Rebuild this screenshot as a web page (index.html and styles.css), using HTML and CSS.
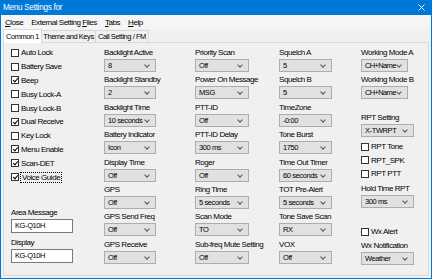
FILE: index.html
```html
<!DOCTYPE html>
<html lang="en">
<head>
    <meta charset="UTF-8">
    <title>Menu Settings</title>
    <link rel="stylesheet" href="styles.css">
</head>
<body>
    <div class="window">
        <div class="titlebar">
            <span class="title">Menu Settings for</span>
            <svg class="close-x" width="7" height="7" viewBox="0 0 7 7"><path d="M0.5 0.5 L6.5 6.5 M6.5 0.5 L0.5 6.5" stroke="#fff" stroke-width="1"/></svg>
        </div>
        <div class="menubar">
            <span><u>C</u>lose</span>
            <span>External Setting <u>F</u>iles</span>
            <span class="menu-tabs"><u>T</u>abs</span>
            <span><u>H</u>elp</span>
        </div>
        <div class="tabs">
            <div class="tab active">Common 1</div>
            <div class="tab tab-theme">Theme and Keys</div>
            <div class="tab tab-call">Call Setting / FM</div>
        </div>
        <div class="tabpage">
            <!-- colonne des cases a cocher -->
            <div class="col col-checks">
                <div class="checks">
                    <div class="check"><span class="box"></span>Auto Lock</div>
                    <div class="check"><span class="box"></span>Battery Save</div>
                    <div class="check"><span class="box checked"></span>Beep</div>
                    <div class="check"><span class="box"></span>Busy Lock-A</div>
                    <div class="check"><span class="box"></span>Busy Lock-B</div>
                    <div class="check"><span class="box checked"></span>Dual Receive</div>
                    <div class="check"><span class="box"></span>Key Lock</div>
                    <div class="check"><span class="box checked"></span>Menu Enable</div>
                    <div class="check"><span class="box checked"></span>Scan-DET</div>
                    <div class="check"><span class="box checked"></span><span class="focus">Voice Guide</span></div>
                </div>
                <div class="field area-field">
                    <div class="lbl">Area Message</div>
                    <div class="textbox">KG-Q10H</div>
                </div>
                <div class="field display-field">
                    <div class="lbl">Display</div>
                    <div class="textbox">KG-Q10H</div>
                </div>
            </div>

            <div class="col col-2">
                <div class="field"><div class="lbl">Backlight Active</div><div class="select">8</div></div>
                <div class="field"><div class="lbl">Backlight Standby</div><div class="select">2</div></div>
                <div class="field"><div class="lbl">Backlight Time</div><div class="select">10 seconds</div></div>
                <div class="field"><div class="lbl">Battery Indicator</div><div class="select">Icon</div></div>
                <div class="field"><div class="lbl">Display Time</div><div class="select">Off</div></div>
                <div class="field"><div class="lbl">GPS</div><div class="select">Off</div></div>
                <div class="field"><div class="lbl">GPS Send Freq</div><div class="select">Off</div></div>
                <div class="field"><div class="lbl">GPS Receive</div><div class="select">Off</div></div>
            </div>

            <div class="col col-3">
                <div class="field"><div class="lbl">Priority Scan</div><div class="select">Off</div></div>
                <div class="field"><div class="lbl">Power On Message</div><div class="select">MSG</div></div>
                <div class="field"><div class="lbl">PTT-ID</div><div class="select">Off</div></div>
                <div class="field"><div class="lbl">PTT-ID Delay</div><div class="select">300 ms</div></div>
                <div class="field"><div class="lbl">Roger</div><div class="select">Off</div></div>
                <div class="field"><div class="lbl">Ring Time</div><div class="select">5 seconds</div></div>
                <div class="field"><div class="lbl">Scan Mode</div><div class="select">TO</div></div>
                <div class="field"><div class="lbl">Sub-freq Mute Setting</div><div class="select">Off</div></div>
            </div>

            <div class="col col-4">
                <div class="field"><div class="lbl">Squelch A</div><div class="select">5</div></div>
                <div class="field"><div class="lbl">Squelch B</div><div class="select">5</div></div>
                <div class="field"><div class="lbl">TimeZone</div><div class="select">-0:00</div></div>
                <div class="field"><div class="lbl">Tone Burst</div><div class="select">1750</div></div>
                <div class="field"><div class="lbl">Time Out Timer</div><div class="select">60 seconds</div></div>
                <div class="field"><div class="lbl">TOT Pre-Alert</div><div class="select">5 seconds</div></div>
                <div class="field"><div class="lbl">Tone Save Scan</div><div class="select">RX</div></div>
                <div class="field"><div class="lbl">VOX</div><div class="select">Off</div></div>
            </div>

            <div class="col col-5">
                <div class="field"><div class="lbl">Working Mode A</div><div class="select narrow">CH+Name</div></div>
                <div class="field"><div class="lbl">Working Mode B</div><div class="select narrow">CH+Name</div></div>
                <div class="field rpt-field"><div class="lbl">RPT Setting</div><div class="select">X-TWRPT</div></div>
                <div class="rpt-checks">
                    <div class="check"><span class="box"></span>RPT Tone</div>
                    <div class="check"><span class="box"></span>RPT_SPK</div>
                    <div class="check"><span class="box"></span>RPT PTT</div>
                </div>
                <div class="field hold-field"><div class="lbl">Hold Time RPT</div><div class="select">300 ms</div></div>
                <div class="check wx-alert"><span class="box"></span>Wx Alert</div>
                <div class="field wx-field"><div class="lbl">Wx Notification</div><div class="select">Weather</div></div>
            </div>
        </div>
    </div>
</body>
</html>
```

FILE: styles.css
```css
* {
    box-sizing: border-box;
}

body {
    margin: 0;
    font-family: "Liberation Sans", Arial, sans-serif;
    font-size: 8px;
    letter-spacing: -0.45px;
    color: #000;
    background: #fff;
}

.window {
    width: 432px;
    height: 279px;
    border: 1px solid #0078d7;
    border-top: none;
    background: #f0f0f0;
    display: flex;
    flex-direction: column;
}

.titlebar {
    height: 15px;
    margin: 0 -1px;
    background: #0078d7;
    color: #fff;
    display: flex;
    align-items: center;
    justify-content: space-between;
    padding: 0 7px 0 3px;
    font-size: 8.2px;
    letter-spacing: -0.3px;
}

.close-x {
    display: block;
}

.menubar {
    height: 14px;
    display: flex;
    align-items: center;
    gap: 8px;
    padding-left: 4px;
    background: #f5f5f5;
}

.tabs {
    height: 13px;
    display: flex;
    align-items: flex-end;
    padding-left: 2px;
    position: relative;
    z-index: 1;
    font-size: 7.5px;
}

.tab {
    height: 12px;
    width: 55px;
    border: 1px solid #d9d9d9;
    border-bottom: none;
    background: #f0f0f0;
    display: flex;
    align-items: center;
    justify-content: center;
    white-space: nowrap;
    margin-left: -1px;
}

.tab.active {
    width: 39px;
    height: 14px;
    margin-left: 0;
    margin-bottom: -1px;
    background: #fff;
    padding-bottom: 1px;
}

.tab-call {
    width: 54px;
}

.tabpage {
    flex: 1;
    margin: 0 2px 2px 2px;
    border: 1px solid #d9d9d9;
    padding: 5px 0 0 7px;
    display: grid;
    grid-template-columns: 93px 91px 84px 82px 1fr;
}

.col {
    display: flex;
    flex-direction: column;
}

.field {
    margin-bottom: 3.4px;
}

.lbl {
    height: 10px;
    line-height: 10px;
    margin-bottom: 1px;
    white-space: nowrap;
}

.select {
    position: relative;
    height: 13px;
    line-height: 11px;
    padding: 0 9px 0 3px;
    font-size: 7.5px;
    letter-spacing: -0.4px;
    white-space: nowrap;
    overflow: hidden;
    background: #e1e1e1;
    border: 1px solid #adadad;
}

.select::after {
    content: "";
    position: absolute;
    right: 6px;
    top: 3px;
    width: 3px;
    height: 3px;
    border-right: 1px solid #555;
    border-bottom: 1px solid #555;
    transform: rotate(45deg);
}

.col-2 .select {
    width: 52px;
}

.col-3 .select {
    width: 54px;
}

.col-4 .select {
    width: 53px;
}

.col-5 .select {
    width: 53px;
}

.col-5 .select.narrow {
    width: 47px;
    letter-spacing: -0.65px;
}

.textbox {
    width: 62px;
    height: 14px;
    line-height: 12px;
    padding-left: 3px;
    font-size: 7.5px;
    letter-spacing: -0.4px;
    background: #fff;
    border: 1px solid #7a7a7a;
}

.checks {
    margin-top: -2px;
}

.check {
    height: 13.8px;
    display: flex;
    align-items: center;
    gap: 2px;
    white-space: nowrap;
}

.box {
    position: relative;
    width: 8px;
    height: 8px;
    border: 1px solid #333;
    background: #fff;
    flex-shrink: 0;
}

.box.checked::after {
    content: "";
    position: absolute;
    left: 1.5px;
    top: 0;
    width: 2px;
    height: 4px;
    border-right: 1px solid #000;
    border-bottom: 1px solid #000;
    transform: rotate(40deg);
}

.focus {
    outline: 1px dotted #000;
    outline-offset: 0;
    padding: 0 1px;
}

.area-field {
    margin-top: 24px;
    margin-bottom: 5px;
}

.rpt-field {
    margin-top: 10px;
}

.rpt-checks .check {
    height: 13.5px;
}

.hold-field {
    margin-top: 3px;
}

.wx-alert {
    margin-top: 14px;
}

.wx-field {
    margin-top: 2px;
}
```
